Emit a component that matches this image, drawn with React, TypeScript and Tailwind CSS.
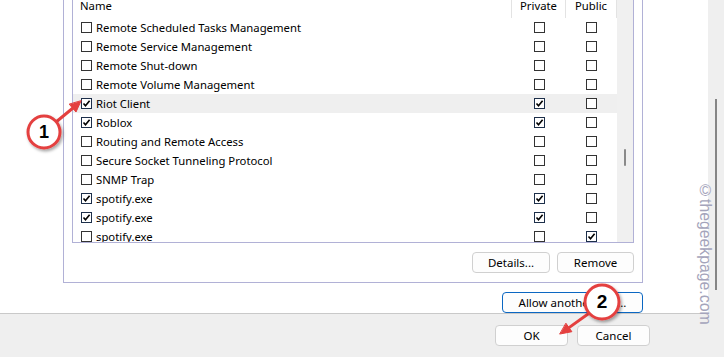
import { ReactNode } from 'react';

type Row = { name: string; on: boolean; priv: boolean; pub: boolean; hl?: boolean };

const rows: Row[] = [
  { name: 'Remote Scheduled Tasks Management', on: false, priv: false, pub: false },
  { name: 'Remote Service Management', on: false, priv: false, pub: false },
  { name: 'Remote Shut-down', on: false, priv: false, pub: false },
  { name: 'Remote Volume Management', on: false, priv: false, pub: false },
  { name: 'Riot Client', on: true, priv: true, pub: false, hl: true },
  { name: 'Roblox', on: true, priv: true, pub: false },
  { name: 'Routing and Remote Access', on: false, priv: false, pub: false },
  { name: 'Secure Socket Tunneling Protocol', on: false, priv: false, pub: false },
  { name: 'SNMP Trap', on: false, priv: false, pub: false },
  { name: 'spotify.exe', on: true, priv: true, pub: false },
  { name: 'spotify.exe', on: true, priv: true, pub: false },
  { name: 'spotify.exe', on: false, priv: false, pub: true },
];

function Box({ checked }: { checked: boolean }) {
  return (
    <span
      className={`flex h-[11px] w-[11px] shrink-0 items-center justify-center border bg-white ${
        checked ? 'border-[#1d2f4a]' : 'border-[#333333]'
      }`}
    >
      {checked && (
        <svg width="9" height="9" viewBox="0 0 9 9">
          <path d="M1.5 4.5 L3.5 6.8 L7.6 1.8" fill="none" stroke="#000" strokeWidth="1.6" />
        </svg>
      )}
    </span>
  );
}

function Btn({ children, className = '' }: { children: ReactNode; className?: string }) {
  return (
    <div
      className={`flex h-[21px] items-center justify-center rounded-[4px] border bg-[#fdfdfd] text-[11.5px] text-black ${className}`}
    >
      {children}
    </div>
  );
}

export default function App() {
  return (
    <div className="relative flex h-[357px] w-[724px] overflow-hidden bg-white font-['Noto_Sans',sans-serif] text-[11.3px] text-black">
      {/* dialog */}
      <div className="flex w-[708px] flex-col">
        <div className="flex h-[313px]">
          <div className="w-[63px] shrink-0" />
          <div className="flex w-[580px] flex-col">
            {/* group box */}
            <div className="flex h-[283px] flex-col border-x border-b border-[#b1b1d6] px-[8px]">
              {/* list */}
              <div className="flex h-[243px] border-x border-b border-[#b1b1d6]">
                <div className="flex w-[544px] flex-col overflow-hidden">
                  <div className="-mt-[5px] flex h-[23px] shrink-0 items-center bg-white">
                    <div className="flex h-full w-[439px] items-center border-r border-[#e3e3e3] pl-[7px]">Name</div>
                    <div className="flex h-full w-[54px] items-center justify-center border-r border-[#e3e3e3]">Private</div>
                    <div className="flex h-full w-[51px] items-center justify-center border-r border-[#e3e3e3]">Public</div>
                  </div>
                  {rows.map((r, i) => (
                    <div
                      key={i}
                      className={`flex h-[19px] shrink-0 items-center ${r.hl ? 'bg-[#efefef]' : ''}`}
                    >
                      <div className="flex w-[439px] items-center gap-[4px] pl-[8px]">
                        <Box checked={r.on} />
                        <span className="whitespace-nowrap leading-none">{r.name}</span>
                      </div>
                      <div className="flex w-[54px] justify-center">
                        <Box checked={r.priv} />
                      </div>
                      <div className="flex w-[51px] justify-center">
                        <Box checked={r.pub} />
                      </div>
                    </div>
                  ))}
                </div>
                {/* scrollbar */}
                <div className="flex w-[16px] shrink-0 justify-center bg-[#f0f0f0] pt-[149px]">
                  <div className="h-[17px] w-[2px] rounded-full bg-[#8a8a8a]" />
                </div>
              </div>
              <div className="mt-[9px] flex justify-end gap-[7px]">
                <Btn className="w-[78px] border-[#d0d0d0]">Details...</Btn>
                <Btn className="w-[77px] border-[#d0d0d0]">Remove</Btn>
              </div>
            </div>
            <div className="mt-[9px] flex justify-end">
              <Btn className="w-[141px] border-[#0b67c2]">Allow another app...</Btn>
            </div>
          </div>
        </div>
        {/* footer */}
        <div className="flex flex-1 justify-end gap-[9px] border-t border-[#c9c9c9] bg-[#efefef] pr-[58px] pt-[11px]">
          <Btn className="w-[73px] border-[#d0d0d0]">OK</Btn>
          <Btn className="w-[73px] border-[#d0d0d0]">Cancel</Btn>
        </div>
      </div>

      {/* page scrollbar strip */}
      <div className="flex w-[16px] justify-center bg-[#efefef] pt-[99px]">
        <div className="h-[191px] w-[2px] bg-[#858585]" />
      </div>

      {/* watermark */}
      <div className="pointer-events-none absolute left-[697px] top-[182px] font-['Liberation_Sans',sans-serif] text-[15.8px] leading-none text-[#a4a4bb] [writing-mode:vertical-rl]">
        ©thegeekpage.com
      </div>

      {/* annotations */}
      <svg className="pointer-events-none absolute left-0 top-0" width="724" height="357" viewBox="0 0 724 357">
        <defs>
          <filter id="sh" x="-50%" y="-50%" width="200%" height="200%">
            <feDropShadow dx="1.5" dy="2" stdDeviation="1.8" floodColor="#000" floodOpacity="0.35" />
          </filter>
        </defs>
        <g fill="#e4403f" stroke="#e4403f" strokeLinecap="round">
          <line x1="56" y1="122" x2="73" y2="108" strokeWidth="3" />
          <polygon points="81,101 76,112 69.4,104.4" strokeWidth="1" />
          <line x1="588" y1="314" x2="569" y2="327.6" strokeWidth="3" />
          <polygon points="560,334 571.9,331.7 566.1,323.5" strokeWidth="1" />
        </g>
        <circle cx="44" cy="132" r="16" fill="#fff" stroke="#e4403f" strokeWidth="3" filter="url(#sh)" />
        <circle cx="602" cy="302" r="17" fill="#fff" stroke="#e4403f" strokeWidth="3" filter="url(#sh)" />
      </svg>
      <div className="pointer-events-none absolute left-[28px] top-[116px] flex h-[32px] w-[32px] items-center justify-center font-['Liberation_Sans',sans-serif] text-[18px] font-bold text-black">
        1
      </div>
      <div className="pointer-events-none absolute left-[585px] top-[285px] flex h-[34px] w-[34px] items-center justify-center font-['Liberation_Sans',sans-serif] text-[19px] font-bold text-black">
        2
      </div>
    </div>
  );
}
